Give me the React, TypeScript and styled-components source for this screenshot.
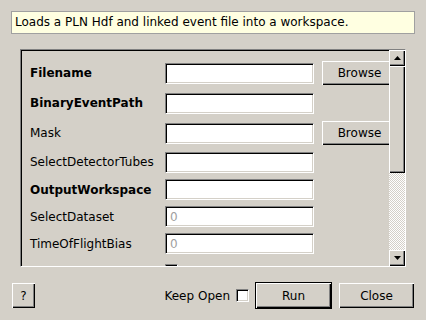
import React from "react";
import styled, { createGlobalStyle, css } from "styled-components";

const GlobalStyle = createGlobalStyle`
  html, body { margin: 0; padding: 0; background: #d4d0c8; }
  body {
    font-family: "DejaVu Sans", "Noto Sans", sans-serif;
    font-size: 12px;
    color: #000;
    width: 426px;
    height: 320px;
    overflow: hidden;
  }
`;

const bevel = css`
  box-shadow: inset 1px 1px 0 #ffffff, inset -1px -1px 0 #000000,
    inset -2px -2px 0 #808080;
`;

const sunken = css`
  border: 1px solid;
  border-color: #808080 #ffffff #ffffff #808080;
  box-shadow: inset 1px 1px 0 #000000, inset -1px -1px 0 #d4d0c8;
`;

const Page = styled.div`
  width: 426px;
  height: 320px;
  box-sizing: border-box;
  padding: 11px 11px 0 11px;
  display: flex;
  flex-direction: column;
`;

const Description = styled.div`
  height: 23px;
  box-sizing: border-box;
  border: 1px solid #a0a0a0;
  background: #ffffe1;
  padding-left: 3px;
  line-height: 21px;
  white-space: nowrap;
`;

const Frame = styled.div`
  margin-top: 15px;
  margin-left: 9px;
  width: 386px;
  height: 218px;
  box-sizing: border-box;
  ${sunken};
  display: flex;
`;

const Content = styled.div`
  flex: 1;
  overflow: hidden;
  padding: 11px 0 0 9px;
  display: flex;
  flex-direction: column;
  gap: 6px;
`;

const Row = styled.div<{ $h: number }>`
  flex: none;
  height: ${(p) => p.$h}px;
  display: grid;
  grid-template-columns: 127px 149px 75px;
  column-gap: 8px;
  align-items: center;
`;

const Label = styled.span<{ $bold?: boolean }>`
  white-space: nowrap;
  font-weight: ${(p) => (p.$bold ? 700 : 400)};
`;

const TextInput = styled.input`
  width: 149px;
  height: 21px;
  box-sizing: border-box;
  margin: 0;
  ${sunken};
  background: #ffffff;
  padding: 0 4px;
  font-family: "DejaVu Sans", sans-serif;
  font-size: 12px;
  color: #000;
  outline: none;
  &::placeholder {
    color: #a0a0a0;
    opacity: 1;
  }
`;

const Button = styled.button<{ $w: number; $h: number; $default?: boolean }>`
  width: ${(p) => p.$w}px;
  height: ${(p) => p.$h}px;
  box-sizing: border-box;
  margin: 0;
  padding: 0;
  background: #d4d0c8;
  font-family: "DejaVu Sans", sans-serif;
  font-size: 12px;
  color: #000;
  border: ${(p) => (p.$default ? "1px solid #000" : "none")};
  ${bevel};
  flex: none;
`;

const CheckBox = styled.span<{ $mt?: number }>`
  display: block;
  width: 13px;
  height: 13px;
  margin-top: ${(p) => p.$mt ?? 0}px;
  box-sizing: border-box;
  ${sunken};
  background: #ffffff;
  flex: none;
`;

const Scrollbar = styled.div`
  width: 16px;
  flex: none;
  display: flex;
  flex-direction: column;
`;

const ArrowButton = styled.div`
  width: 16px;
  height: 16px;
  box-sizing: border-box;
  background: #d4d0c8;
  ${bevel};
  display: flex;
  align-items: center;
  justify-content: center;
  flex: none;
`;

const Thumb = styled.div`
  height: 107px;
  flex: none;
  background: #d4d0c8;
  ${bevel};
`;

const Track = styled.div`
  flex: 1;
  background: repeating-conic-gradient(#ffffff 0 25%, #d4d0c8 0 50%) 0 0 / 2px 2px;
`;

const Footer = styled.div`
  margin-top: 15px;
  height: 27px;
  padding: 0 1px;
  display: flex;
  align-items: center;
`;

const Spacer = styled.div`
  flex: 1;
`;

const KeepOpen = styled.span`
  margin-right: 6px;
  white-space: nowrap;
`;

const Gap = styled.div<{ $w: number }>`
  width: ${(p) => p.$w}px;
  flex: none;
`;

const Arrow = ({ up }: { up: boolean }) => (
  <svg width="7" height="4" viewBox="0 0 7 4">
    <polygon points={up ? "3.5,0 7,4 0,4" : "0,0 7,0 3.5,4"} fill="#000" />
  </svg>
);

type Prop = {
  name: string;
  bold?: boolean;
  browse?: boolean;
  placeholder?: string;
  h: number;
};

const props: Prop[] = [
  { name: "Filename", bold: true, browse: true, h: 24 },
  { name: "BinaryEventPath", bold: true, h: 24 },
  { name: "Mask", browse: true, h: 24 },
  { name: "SelectDetectorTubes", h: 22 },
  { name: "OutputWorkspace", bold: true, h: 21 },
  { name: "SelectDataset", placeholder: "0", h: 21 },
  { name: "TimeOfFlightBias", placeholder: "0", h: 21 },
];

export default function App() {
  return (
    <>
      <GlobalStyle />
      <Page>
        <Description>Loads a PLN Hdf and linked event file into a workspace.</Description>
        <Frame>
          <Content>
            {props.map((p) => (
              <Row key={p.name} $h={p.h}>
                <Label $bold={p.bold}>{p.name}</Label>
                <TextInput placeholder={p.placeholder} readOnly />
                {p.browse ? (
                  <Button $w={75} $h={24}>
                    Browse
                  </Button>
                ) : (
                  <span />
                )}
              </Row>
            ))}
            <Row $h={17}>
              <span />
              <CheckBox $mt={4} />
            </Row>
          </Content>
          <Scrollbar>
            <ArrowButton>
              <Arrow up />
            </ArrowButton>
            <Thumb />
            <Track />
            <ArrowButton>
              <Arrow up={false} />
            </ArrowButton>
          </Scrollbar>
        </Frame>
        <Footer>
          <Button $w={23} $h={25}>
            ?
          </Button>
          <Spacer />
          <KeepOpen>Keep Open</KeepOpen>
          <CheckBox />
          <Gap $w={6} />
          <Button $w={77} $h={27} $default>
            Run
          </Button>
          <Gap $w={7} />
          <Button $w={75} $h={25}>
            Close
          </Button>
        </Footer>
      </Page>
    </>
  );
}
